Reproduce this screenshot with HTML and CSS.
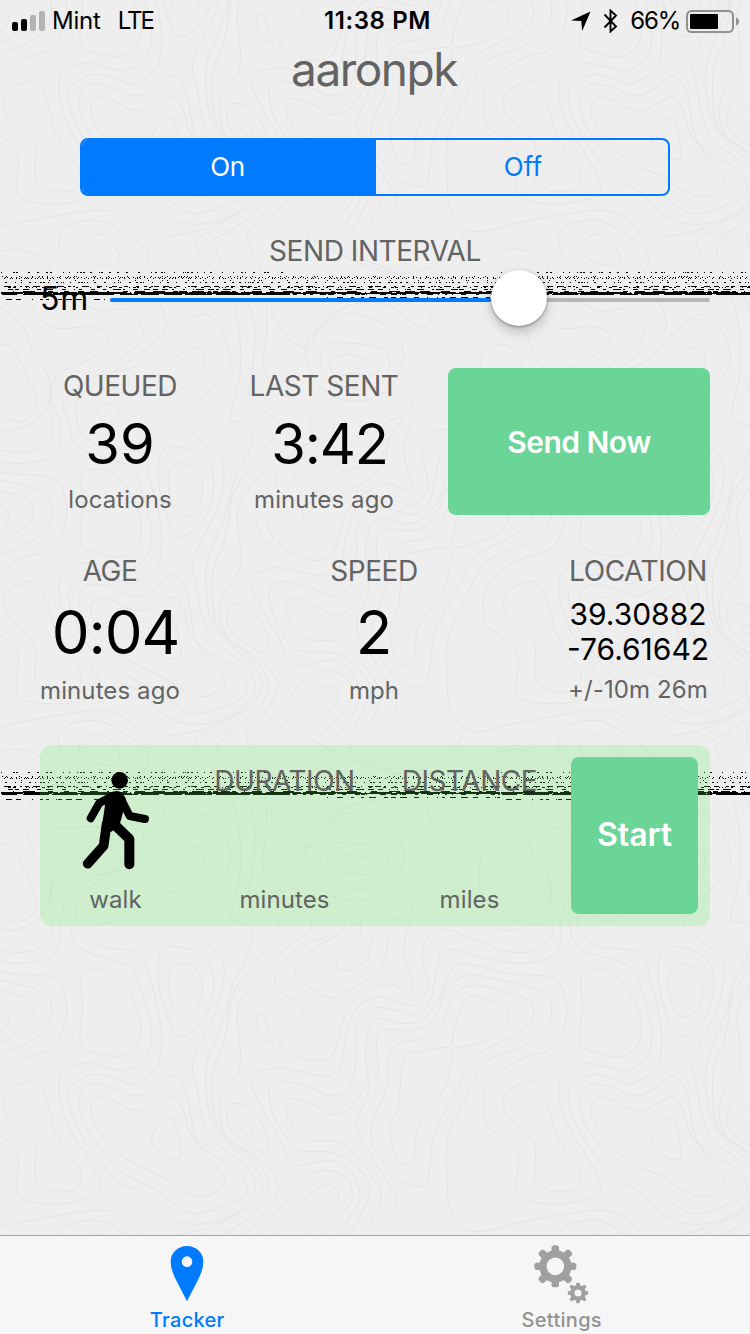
FILE: index.html
```
<!DOCTYPE html>
<html lang="en">
<head>
  <meta charset="UTF-8">
  <title>Tracker</title>
  <link rel="stylesheet" href="styles.css">
</head>
<body>
  <svg class="map-bg" width="750" height="1334" aria-hidden="true">
    <defs>
      <g id="contours"></g>
      <pattern id="topo" y="-80" width="500" height="500" patternUnits="userSpaceOnUse">
        <g id="tile" transform="scale(0.33333)"></g>
        <path id="static" shape-rendering="crispEdges"></path>
      </pattern>
    </defs>
    <rect width="750" height="1334" fill="url(#topo)"/>
  </svg>

  <div class="screen">
    <header class="status-bar">
      <div class="status-left">
        <svg width="34" height="20" viewBox="0 0 34 20">
          <rect y="11" width="6" height="9" rx="2"/>
          <rect x="9" y="8" width="6" height="12" rx="2"/>
          <rect x="18" y="4" width="6" height="16" rx="2" fill="#b3b3b3"/>
          <rect x="27" width="6" height="20" rx="2" fill="#b3b3b3"/>
        </svg>
        <span class="carrier">Mint</span>
        <span class="network">LTE</span>
      </div>
      <span class="clock">11:38 PM</span>
      <div class="status-right">
        <svg class="arrow" width="20" height="20" viewBox="0 0 20 20"><path d="M19.5 .5 0 9.5l10.3.6.9 9.9z"/></svg>
        <svg class="bluetooth" width="16" height="24" viewBox="0 0 16 24"><path d="M1.5 5.5 13 17.5 7.5 22.5v-21L13 6.5 1.5 18.5" fill="none" stroke="#000" stroke-width="1.9"/></svg>
        <span class="percent">66%</span>
        <svg width="54" height="23" viewBox="0 0 54 23">
          <rect x="1" y="1" width="46" height="21" rx="4.5" fill="none" stroke="#909090" stroke-width="2"/>
          <rect x="4" y="4" width="28" height="15" rx="1"/>
          <path d="M50 7.5q3 1 3 4t-3 4z" fill="#909090"/>
        </svg>
      </div>
    </header>

    <h1 class="title">aaronpk</h1>

    <div class="segmented">
      <button class="segment active">On</button>
      <button class="segment">Off</button>
    </div>

    <p class="label interval-label">SEND INTERVAL</p>
    <div class="slider-row">
      <span class="slider-value">5m</span>
      <div class="slider"><div class="slider-fill"></div><div class="slider-thumb"></div></div>
    </div>

    <section class="queue-row">
      <div class="stat">
        <span class="label">QUEUED</span>
        <span class="value">39</span>
        <span class="unit">locations</span>
      </div>
      <div class="stat">
        <span class="label">LAST SENT</span>
        <span class="value time">3:42</span>
        <span class="unit">minutes ago</span>
      </div>
      <button class="btn btn-send">Send Now</button>
    </section>

    <section class="location-row">
      <div class="stat">
        <span class="label">AGE</span>
        <span class="value time">0:04</span>
        <span class="unit">minutes ago</span>
      </div>
      <div class="stat">
        <span class="label">SPEED</span>
        <span class="value">2</span>
        <span class="unit">mph</span>
      </div>
      <div class="stat">
        <span class="label">LOCATION</span>
        <span class="coords">39.30882<br>-76.61642</span>
        <span class="unit">+/-10m 26m</span>
      </div>
    </section>

    <section class="trip">
      <div class="trip-col">
        <svg class="walk" width="68" height="98" viewBox="246 95 204 294">
          <circle cx="359" cy="120" r="25"/>
          <path d="M298 182 340 155Q352 148 365 157L377 174 372 205 361 246 350 262 333 275 305 262 315 195z"/>
          <g fill="none" stroke="#000" stroke-linecap="round" stroke-linejoin="round">
            <path d="M272 234 298 188 340 166" stroke-width="24"/>
            <path d="M361 172 389 227 435 236" stroke-width="24"/>
            <path d="M263 370 311 316 320 250" stroke-width="29"/>
            <path d="M388 372V296L343 252" stroke-width="30"/>
          </g>
        </svg>
        <span class="unit">walk</span>
      </div>
      <div class="trip-col">
        <span class="label">DURATION</span>
        <span class="unit">minutes</span>
      </div>
      <div class="trip-col">
        <span class="label">DISTANCE</span>
        <span class="unit">miles</span>
      </div>
      <button class="btn btn-start">Start</button>
    </section>

    <nav class="tab-bar">
      <a class="tab selected">
        <svg width="34" height="57" viewBox="212 62 100 171"><path fill="#007aff" fill-rule="evenodd" d="M262 231 228 165Q213 134 213 112A49 47 0 0 1 311 112Q311 134 296 165ZM278 112a16 16 0 1 0-32 0a16 16 0 1 0 32 0"/></svg>
        <span>Tracker</span>
      </a>
      <a class="tab">
        <svg width="56" height="60" viewBox="162 58 168 180">
          <defs>
            <g id="gear" fill="none" stroke="#a0a0a0">
              <circle r="37.5" stroke-width="22"/>
              <path stroke-width="22" d="M0-40V-58M0 40V58M-40 0H-58M40 0H58M28-28 40-40M-28-28-40-40M28 28 40 40M-28 28-40 40"/>
              <path stroke-width="16" stroke-linecap="round" d="M-3-55H3M-3 55H3M-55-3V3M55-3V3M38-42 42-38M-38-42-42-38M38 42 42 38M-38 42-42 38"/>
            </g>
          </defs>
          <use href="#gear" transform="translate(226 122)"/>
          <use href="#gear" transform="translate(294 202) scale(.49)"/>
          <circle cx="294" cy="202" r="13" fill="none" stroke="#a0a0a0" stroke-width="5"/>
        </svg>
        <span>Settings</span>
      </a>
    </nav>
  </div>

  <script>
    // Contour lines of the map texture, as x,y points. The tile is 1500 x 1500 units.
    const closed = [
      '248,162 290,148 340,160 390,220 423,310 412,375 365,409 310,404 250,382 240,345 247,270 244,210',
      '520,79 590,97 635,145 638,230 605,305 542,351 508,305 480,215 475,130 490,90',
      '548,131 590,150 608,205 588,270 550,290 520,262 505,200 515,145',
      '780,280 795,292 805,328 818,357 803,371 785,350 768,300',
      '510,595 530,625 543,708 510,715 475,695 455,660 470,625',
      '710,550 755,570 797,635 805,694 770,690 710,650 681,605 688,562',
      '738,613 754,630 752,644 736,640 724,622',
      '80,485 120,500 145,555 165,630 200,695 242,755 230,805 165,815 110,785 105,735 105,675 70,630 20,585 15,525',
      '300,532 345,545 380,565 430,571 480,545 520,532 550,570 570,640 610,692 673,775 650,815 600,830 545,808 490,772 410,735 340,685 290,620 271,565',
      '290,492 345,505 380,522 420,527 465,505 520,466 560,520 585,650 630,700 700,740 740,795 715,840 590,881 520,850 470,810 390,772 330,720 260,620 238,555 250,505',
      '1360,378 1370,300 1395,240 1435,230 1505,255 1527,295 1495,340 1425,370',
      '1350,385 1255,395 1210,420 1195,560 1170,620 1185,710 1220,735 1245,700 1255,620 1325,520 1350,440',
      '240,975 285,942 330,960 360,1010 340,1035 290,1030 245,1000',
      '580,1280 615,1310 600,1360 540,1410 480,1410 475,1380 520,1320',
      '325,1450 357,1478 325,1510 293,1478',
      '990,1330 1030,1303 1110,1320 1135,1350 1110,1365 1050,1360 1010,1370',
      '960,1320 985,1275 1060,1270 1150,1290 1168,1350 1130,1400 1050,1405 985,1370',
      '920,1270 990,1200 1060,1180 1170,1225 1210,1300 1180,1390 1100,1440 1000,1430 935,1360'
    ];
    const open = [
      '230,0 245,40 300,80 390,90 430,110 450,180 470,250 485,350 470,440 400,490 350,478 280,463 215,500 210,560 260,670 350,780 420,815 500,890 590,913 700,885 765,810 740,740 650,670 610,600 590,500 578,430 610,350 650,270 672,170 660,110 600,60 555,20 547,0',
      '208,0 220,60 260,95 340,120 400,150 430,230 455,330 440,410 380,451 315,440 250,430 185,460 178,530 205,620 260,710 300,790 290,825 200,850 90,845 50,815 55,720 40,680 0,645 -40,615 -50,540 -25,480 55,420 145,390 185,340 200,270 185,200 145,170 25,160 -95,133 -145,150 -185,240 -235,300 -295,310 -355,295 -390,320 -404,400 -395,510 -430,620 -375,725 -310,850 -375,930',
      '690,0 740,15 757,45 740,110 700,190 680,270 650,350 620,430 620,530 640,610 700,680 770,750 783,810 720,880 600,930 500,950',
      '835,0 830,40 770,120 700,220 685,300 670,370 640,450 640,560 660,630 740,700 795,760 803,820 750,890 640,960',
      '935,0 925,35 830,110 730,230 712,290 722,400 715,455 665,530 660,600 690,660 780,720 830,780 825,830 770,910 740,950 790,1080 800,1230 790,1350 860,1430 935,1500',
      '1000,0 990,40 890,90 830,160 835,210 895,250 905,300 840,365 870,395 940,422 1000,400 1030,300 1065,240 1125,202 1165,192 1225,210 1238,190 1215,120 1215,60 1235,0',
      '1035,0 1020,40 950,80 890,140 895,180 990,232 1050,210 1125,162 1155,120 1165,60 1205,0',
      '1080,0 1080,50 1015,120 1015,145 1050,150 1100,120 1115,60 1165,0',
      '1655,0 1655,50 1605,90 1525,95 1425,60 1345,30 1295,40 1265,100 1283,180 1275,225 1235,257 1170,235 1125,232 1070,265 1040,340 1020,440 980,468 900,455 830,443 760,465 755,500 800,590 835,650 870,725 910,735 990,721 1050,750 1080,830 1050,890 1000,960',
      '1680,0 1680,70 1645,115 1555,130 1455,115 1365,90 1325,95 1310,150 1290,240 1245,283 1175,268 1125,262 1100,275 1070,320 1070,400 1050,500 1000,528 920,500 850,485 810,505 815,570 850,640 890,690 990,697 1060,730 1110,800 1090,870 1040,960',
      '1125,500 1135,460 1130,360 1155,330 1245,330 1305,290 1345,200 1405,167 1475,175 1625,215 1655,270 1635,330 1565,380 1455,430 1385,560 1345,650 1340,750 1355,880 1425,935 1545,910 1685,885 1800,870 1870,890 1925,945',
      '1125,585 1160,500 1170,400 1205,368 1275,355 1325,310 1365,220 1415,197 1475,205 1585,240 1595,300 1525,355 1425,410 1375,500 1305,640 1285,770 1255,800 1195,780 1145,720 1115,670 1115,620 1125,585',
      '820,945 880,880 940,815 985,795 1015,820 1000,860 920,945',
      '770,945 870,830 920,770 985,751 1045,780 1050,850 960,945',
      '1095,500 1050,565 1000,585 940,555 880,535 857,560 880,620 930,660 1010,665 1070,710 1130,790 1142,840 1110,910',
      '175,945 210,912 300,903 380,945 440,990 440,1040 400,1070 300,1095 220,1040 180,990 175,945',
      '0,995 60,988 130,1020 180,1100 290,1170 380,1170 430,1250 340,1330 240,1400 190,1450 205,1500',
      '90,1140 120,1200 180,1226 280,1220 330,1250 280,1310 180,1360 150,1430 180,1500',
      '0,1160 70,1220 100,1300 145,1370 150,1440 110,1500 40,1530 -20,1525',
      '460,1110 500,1210 460,1270 350,1350 240,1430 230,1500',
      '550,1500 630,1410 690,1330 670,1240 610,1182 520,1240 430,1330 280,1370',
      '0,1272 40,1290 100,1410 105,1470 60,1505 0,1480 -60,1400 -50,1300 0,1272',
      '640,930 590,960 600,1000 640,1050 700,1150 720,1260 720,1360 700,1450 690,1500',
      '700,930 650,990 700,1080 760,1190 760,1330 750,1430 835,1500',
      '810,1170 870,1260 930,1280 960,1220 1040,1160 1150,1150 1260,1220 1290,1190 1220,1080 1060,1000 1070,950',
      '920,950 1060,1020 1200,1060 1330,1020 1400,930',
      '1290,1410 1240,1440 1230,1480 1165,1500'
    ];

    // Smooth curve through every point
    function curve(text, loop) {
      const p = text.split(' ').map(s => s.split(',').map(Number));
      const n = p.length;
      const at = i => loop ? p[(i + n) % n] : p[Math.max(0, Math.min(n - 1, i))];
      let d = `M${p[0]}`;
      for (let i = 0; i < (loop ? n : n - 1); i++) {
        const [a, b, c, e] = [at(i - 1), at(i), at(i + 1), at(i + 2)];
        d += `C${b[0] + (c[0] - a[0]) / 6},${b[1] + (c[1] - a[1]) / 6} ${c[0] - (e[0] - b[0]) / 6},${c[1] - (e[1] - b[1]) / 6} ${c}`;
      }
      return d;
    }

    const lines = closed.map(t => curve(t, true)).concat(open.map(t => curve(t, false))).join('');
    document.getElementById('contours').innerHTML = `<path class="contour" d="${lines}"/>`;

    let copies = '';
    for (const x of [-1500, 0, 1500]) {
      for (const y of [-1500, 0, 1500]) {
        copies += `<use href="#contours" x="${x}" y="${y}"/>`;
      }
    }
    document.getElementById('tile').innerHTML = copies;

    // Broken scan lines: y, longest dash, longest gap, start, end
    const rows = [
      [0, 2, 12, 0, 290], [4, 1, 16, 0, 500], [5, 1, 5, 0, 500], [6, 1, 6, 0, 500],
      [8, 1, 30, 0, 500], [10, 2, 8, 0, 500], [14, 7, 8, 0, 500], [15, 3, 12, 0, 500],
      [17, 8, 9, 0, 500], [19, 12, 14, 0, 500], [20, 60, 4, 0, 500],
      [21, 100, 2, 0, 500], [22, 40, 6, 0, 290], [22, 6, 14, 290, 500],
      [25, 7, 9, 320, 500], [27, 6, 12, 0, 105]
    ];
    let seed = 17;
    function random(max) {
      seed = (seed * 16807) % 2147483647;
      return 1 + Math.floor(seed / 2147483647 * max);
    }
    let dashes = '';
    for (const [y, dash, gap, start, end] of rows) {
      for (let x = start + random(gap); x < end; x += random(gap)) {
        const w = Math.min(random(dash), end - x);
        dashes += `M${x} ${y + 352}h${w}v1h${-w}z`;
        x += w;
      }
    }
    document.getElementById('static').setAttribute('d', dashes);
  </script>
</body>
</html>
```
FILE: styles.css
```
* {
  box-sizing: border-box;
}

body {
  margin: 0;
  width: 750px;
  height: 1334px;
  overflow: hidden;
  background-color: #eeeeee;
  font-family: Inter, "Liberation Sans", sans-serif;
  color: #000;
}

button {
  font-family: inherit;
  border: none;
  padding: 0;
}

svg {
  display: block;
}

.map-bg {
  position: absolute;
  top: 0;
  left: 0;
}

.contour {
  fill: none;
  stroke: #e3e3e3;
  stroke-width: 3;
}

.screen {
  position: relative;
  display: flex;
  flex-direction: column;
  height: 1334px;
}

.status-bar {
  display: grid;
  grid-template-columns: 1fr auto 1fr;
  align-items: center;
  height: 42px;
  padding: 0 10px 0 12px;
  font-size: 24px;
  line-height: 30px;
}

.status-left,
.status-right {
  display: flex;
  align-items: center;
}

.status-right {
  justify-content: flex-end;
}

.carrier {
  margin-left: 6px;
  letter-spacing: -0.2px;
}

.network {
  margin-left: 17px;
  letter-spacing: -2px;
}

.clock {
  padding-left: 3px;
  font-weight: 600;
  letter-spacing: 0.6px;
}

.arrow {
  margin-right: 12px;
}

.bluetooth {
  margin-right: 11px;
}

.percent {
  margin-right: 6px;
  letter-spacing: -1.2px;
}

.title {
  margin: 0;
  font-size: 46px;
  font-weight: 400;
  line-height: 54px;
  letter-spacing: -1.5px;
  text-indent: -2px;
  text-align: center;
  color: #636363;
}

.segmented {
  display: flex;
  width: 590px;
  height: 58px;
  margin: 42px auto 0;
  border: 2px solid #007aff;
  border-radius: 8px;
  overflow: hidden;
}

.segment {
  flex: 1;
  padding: 0 0 1px 2px;
  background: none;
  color: #007aff;
  font-size: 26px;
  letter-spacing: 0.2px;
}

.segment.active {
  flex: 0 0 294px;
  padding: 0 3px 1px 0;
  background-color: #007aff;
  color: #fff;
  letter-spacing: -0.3px;
}

.label {
  font-size: 28px;
  line-height: 34px;
  letter-spacing: -0.45px;
  color: #636363;
  white-space: nowrap;
}

.interval-label {
  margin: 38px 0 0;
  text-align: center;
}

.slider-row {
  display: flex;
  align-items: center;
  height: 64px;
  padding: 0 40px;
}

.slider-value {
  width: 70px;
  padding-bottom: 3px;
  font-size: 32px;
  letter-spacing: 0.8px;
}

.slider {
  display: flex;
  align-items: center;
  flex: 1;
  height: 4px;
  border-radius: 2px;
  background-color: #b6b6b6;
}

.slider-fill {
  width: 381px;
  height: 4px;
  border-radius: 2px;
  background-color: #007aff;
}

.slider-thumb {
  width: 56px;
  height: 56px;
  margin-bottom: 4px;
  border-radius: 50%;
  background-color: #fff;
  box-shadow: 0 6px 12px rgba(0, 0, 0, 0.2), 0 1px 3px rgba(0, 0, 0, 0.35);
}

.stat {
  display: flex;
  flex-direction: column;
  align-items: center;
}

.value {
  font-size: 56px;
  line-height: 82px;
}

.value.time {
  padding-left: 11px;
  letter-spacing: -1.1px;
}

.unit {
  font-size: 24px;
  line-height: 30px;
  letter-spacing: 0.1px;
  color: #636363;
  white-space: nowrap;
}

.queue-row {
  display: grid;
  grid-template-columns: 160px 248px 262px;
  height: 146px;
  margin: 36px 40px 0;
}

.queue-row .stat {
  padding-top: 1px;
}

.btn {
  border-radius: 8px;
  background-color: #6ad597;
  color: #fff;
  font-weight: 600;
}

.btn-send {
  font-size: 30px;
  letter-spacing: -0.5px;
}

.location-row {
  display: flex;
  justify-content: space-between;
  width: 668px;
  height: 151px;
  margin: 40px 0 0 40px;
}

.location-row .stat {
  width: 140px;
}

.location-row .value {
  font-size: 60px;
  line-height: 88px;
}

.coords {
  height: 89px;
  padding-top: 9px;
  font-size: 30px;
  line-height: 35px;
  text-align: center;
}

.trip {
  display: grid;
  grid-template-columns: 151px 187px 183px 127px;
  height: 181px;
  margin: 40px 40px 0;
  border-radius: 12px;
  background-color: rgba(90, 240, 90, 0.21);
}

.trip-col {
  display: flex;
  flex-direction: column;
  align-items: center;
  justify-content: space-between;
  padding: 19px 0 11px;
}

.walk {
  margin-top: 8px;
}

.btn-start {
  height: 157px;
  margin: 12px 0 0 10px;
  padding-bottom: 2px;
  width: 127px;
  font-size: 32px;
}

.tab-bar {
  display: flex;
  height: 99px;
  margin-top: auto;
  border-top: 1px solid #a5a5a5;
  background-color: #f6f6f6;
}

.tab {
  display: flex;
  flex: 1;
  flex-direction: column;
  align-items: center;
  justify-content: space-between;
  padding: 9px 0 0;
  font-size: 20px;
  font-weight: 500;
  line-height: 28px;
  letter-spacing: 0.3px;
  color: #929292;
}

.tab:last-child {
  padding-right: 1px;
}

.selected {
  color: #007aff;
}
```
